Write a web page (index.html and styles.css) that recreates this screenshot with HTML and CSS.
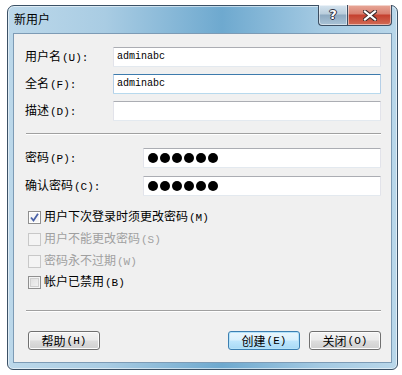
FILE: index.html
```html
<!DOCTYPE html>
<html lang="zh-CN">
<head>
<meta charset="utf-8">
<title>新用户</title>
<link rel="stylesheet" href="styles.css">
</head>
<body>
<div class="window">
  <div class="titlebar">
    <div class="title">新用户</div>
    <div class="caption-buttons">
      <div class="cap help"><span>?</span></div>
      <div class="cap close"><svg width="14" height="11" viewBox="0 0 14 11"><path d="M2 1.5 L12 9.5 M12 1.5 L2 9.5" stroke="#3a2a2a" stroke-width="4.2" stroke-linecap="square"/><path d="M2 1.5 L12 9.5 M12 1.5 L2 9.5" stroke="#ffffff" stroke-width="2.2" stroke-linecap="square"/></svg></div>
    </div>
  </div>
  <div class="client">
    <div class="group">
      <div class="row">
        <label class="label">用户名<span class="a">(U):</span></label>
        <div class="input">adminabc</div>
      </div>
      <div class="row">
        <label class="label">全名<span class="a">(F):</span></label>
        <div class="input focus">adminabc</div>
      </div>
      <div class="row">
        <label class="label">描述<span class="a">(D):</span></label>
        <div class="input"></div>
      </div>
    </div>
    <div class="sep"></div>
    <div class="group pw">
      <div class="row">
        <label class="label">密码<span class="a">(P):</span></label>
        <div class="input pwd"><span class="dot"></span><span class="dot"></span><span class="dot"></span><span class="dot"></span><span class="dot"></span><span class="dot"></span></div>
      </div>
      <div class="row">
        <label class="label">确认密码<span class="a">(C):</span></label>
        <div class="input pwd"><span class="dot"></span><span class="dot"></span><span class="dot"></span><span class="dot"></span><span class="dot"></span><span class="dot"></span></div>
      </div>
    </div>
    <div class="checks">
      <div class="check">
        <span class="box checked"><svg width="9" height="9" viewBox="0 0 9 9"><path d="M1 4.5 L3.5 7.5 L8 0.8" fill="none" stroke="#4a62a8" stroke-width="1.8"/></svg></span>
        <span class="ctext">用户下次登录时须更改密码<span class="a">(M)</span></span>
      </div>
      <div class="check disabled">
        <span class="box"></span>
        <span class="ctext">用户不能更改密码<span class="a">(S)</span></span>
      </div>
      <div class="check disabled">
        <span class="box"></span>
        <span class="ctext">密码永不过期<span class="a">(W)</span></span>
      </div>
      <div class="check">
        <span class="box"></span>
        <span class="ctext">帐户已禁用<span class="a">(B)</span></span>
      </div>
    </div>
    <div class="sep sep2"></div>
    <div class="buttons">
      <div class="btn">帮助<span class="a">(H)</span></div>
      <div class="spacer"></div>
      <div class="btn default">创建<span class="a">(E)</span></div>
      <div class="btn">关闭<span class="a">(O)</span></div>
    </div>
  </div>
</div>
</body>
</html>
```
FILE: styles.css
```css
html, body {
  margin: 0;
  padding: 0;
  background: #ffffff;
}
body {
  font-family: "Noto Sans CJK SC", "Liberation Sans", sans-serif;
  font-size: 12px;
  line-height: 14px;
  color: #000;
}
.a {
  font-family: "Liberation Mono", "DejaVu Sans Mono", monospace;
  font-size: 11px;
  margin-left: 1px;
}
.window {
  box-sizing: border-box;
  margin: 5px 0 0 7px;
  width: 391px;
  height: 365px;
  border: 1px solid #3b5166;
  border-radius: 7px 7px 6px 6px;
  background:
    linear-gradient(90deg, #bcd8ea 0%, #a9cce3 25%, #6ea9cf 55%, #a3c9e2 80%, #b9d7ea 100%);
  padding: 0 5px 6px 5px;
  display: flex;
  flex-direction: column;
  box-shadow: inset 0 0 0 1px rgba(255,255,255,0.55);
}
.titlebar {
  height: 27px;
  display: flex;
  align-items: flex-start;
  flex: none;
}
.title {
  padding: 6px 0 0 1px;
  font-size: 12px;
  line-height: 14px;
  color: #000;
  flex: 1;
}
.caption-buttons {
  display: flex;
  margin-top: -1px;
}
.cap {
  box-sizing: border-box;
  height: 21px;
  border: 1px solid #3c4e62;
  border-top: none;
  display: flex;
  align-items: center;
  justify-content: center;
  box-shadow: inset 0 0 0 1px rgba(255,255,255,0.5);
}
.help {
  width: 29px;
  border-radius: 0 0 0 4px;
  border-right: none;
  background: linear-gradient(180deg, #d6e4ef 0%, #b9cddc 45%, #8eaac1 50%, #a9c3d6 100%);
}
.help span {
  font-family: "DejaVu Sans", sans-serif;
  font-weight: bold;
  font-size: 13px;
  color: #fff;
  text-shadow: 0 0 1px #223, 1px 0 0 #334, -1px 0 0 #334, 0 1px 0 #334, 0 -1px 0 #334;
}
.close {
  width: 45px;
  border-radius: 0 0 4px 0;
  background: linear-gradient(180deg, #e8a898 0%, #d98070 45%, #c5402e 50%, #d16b55 100%);
}
.client {
  flex: 1;
  box-sizing: border-box;
  background: #f0f0f0;
  border: 1px solid #7d9bb5;
  padding: 13px 10px 11px 11px;
  display: flex;
  flex-direction: column;
}
.group {
  display: flex;
  flex-direction: column;
  gap: 7px;
}
.group.pw {
  gap: 8px;
}
.row {
  display: flex;
  align-items: center;
  height: 20px;
}
.label {
  width: 88px;
  flex: none;
}
.pw .label {
  width: 118px;
}
.input {
  box-sizing: border-box;
  flex: 1;
  height: 20px;
  background: #fff;
  border: 1px solid #e2e3ea;
  border-top-color: #abadb3;
  border-bottom-color: #e3e9ef;
  padding: 2px 0 0 3px;
  font-family: "Liberation Mono", "DejaVu Sans Mono", monospace;
  font-size: 10px;
  line-height: 14px;
  border-radius: 1px;
}
.input.focus {
  border-color: #b5cfe7;
  border-top-color: #3d7bad;
  border-bottom-color: #b7d9ed;
}
.input.pwd {
  display: flex;
  align-items: center;
  padding: 0 0 0 4px;
  gap: 2px;
}
.dot {
  width: 10px;
  height: 10px;
  border-radius: 50%;
  background: #000;
}
.sep {
  height: 1px;
  background: #a0a0a0;
  border-bottom: 1px solid #ffffff;
  margin: 12px 0 13px 1px;
}
.checks {
  margin-top: 10px;
  display: flex;
  flex-direction: column;
}
.check {
  display: flex;
  align-items: center;
  height: 22px;
}
.check:last-child {
  height: 20px;
}
.box {
  box-sizing: border-box;
  width: 13px;
  height: 13px;
  margin-left: 3px;
  margin-right: 3px;
  border: 1px solid #8f8f8f;
  background: linear-gradient(135deg, #dcdcdc 0%, #f5f5f5 100%);
  box-shadow: inset 0 0 0 1px #f4f4f4, inset 0 0 0 2px #d0d0d0;
  display: flex;
  align-items: center;
  justify-content: center;
}
.box.checked {
  background: #f6f6f6;
  box-shadow: inset 0 0 0 1px #ffffff;
}
.check.disabled .box {
  border-color: #c8c8c8;
  background: #f4f4f4;
  box-shadow: none;
}
.check.disabled .ctext {
  color: #a0a0a0;
}
.sep2 {
  margin: 18px 0 19px 1px;
}
.buttons {
  display: flex;
  align-items: center;
  gap: 9px;
  padding-left: 3px;
}
.spacer {
  flex: 1;
}
.btn {
  box-sizing: border-box;
  width: 72px;
  height: 19px;
  border: 1px solid #707070;
  border-radius: 3px;
  background: linear-gradient(180deg, #f4f4f4 0%, #ebebeb 48%, #dddddd 52%, #cfcfcf 100%);
  box-shadow: inset 0 0 0 1px #fcfcfc;
  display: flex;
  align-items: center;
  justify-content: center;
  line-height: 14px;
}
.btn.default {
  border-color: #3c7fb1;
  background: linear-gradient(180deg, #eaf6fd 0%, #d9f0fc 48%, #bee6fd 52%, #a7d9f5 100%);
  box-shadow: inset 0 0 0 1px #b5e3fa;
}
```
